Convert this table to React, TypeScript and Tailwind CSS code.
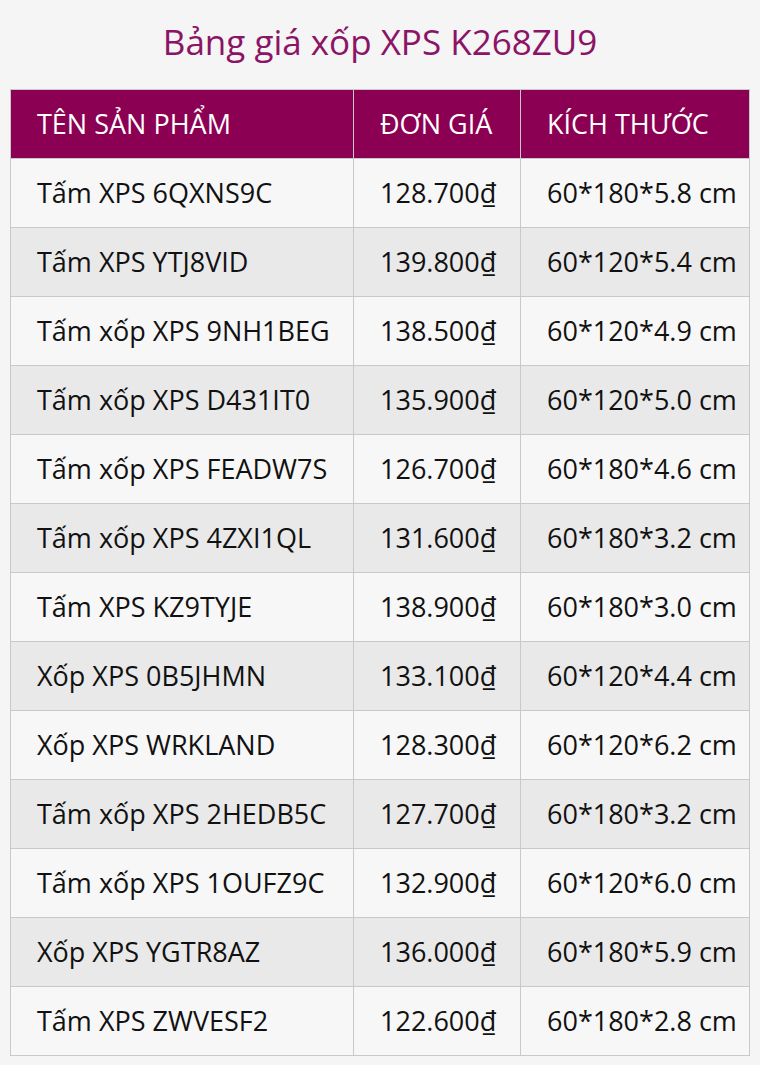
const ROWS: [string, string, string][] = [
  ["Tấm XPS 6QXNS9C", "128.700₫", "60*180*5.8 cm"],
  ["Tấm XPS YTJ8VID", "139.800₫", "60*120*5.4 cm"],
  ["Tấm xốp XPS 9NH1BEG", "138.500₫", "60*120*4.9 cm"],
  ["Tấm xốp XPS D431IT0", "135.900₫", "60*120*5.0 cm"],
  ["Tấm xốp XPS FEADW7S", "126.700₫", "60*180*4.6 cm"],
  ["Tấm xốp XPS 4ZXI1QL", "131.600₫", "60*180*3.2 cm"],
  ["Tấm XPS KZ9TYJE", "138.900₫", "60*180*3.0 cm"],
  ["Xốp XPS 0B5JHMN", "133.100₫", "60*120*4.4 cm"],
  ["Xốp XPS WRKLAND", "128.300₫", "60*120*6.2 cm"],
  ["Tấm xốp XPS 2HEDB5C", "127.700₫", "60*180*3.2 cm"],
  ["Tấm xốp XPS 1OUFZ9C", "132.900₫", "60*120*6.0 cm"],
  ["Xốp XPS YGTR8AZ", "136.000₫", "60*180*5.9 cm"],
  ["Tấm XPS ZWVESF2", "122.600₫", "60*180*2.8 cm"],
];

export default function App() {
  return (
    <div className="min-h-[1065px] w-[760px] bg-[#f5f5f5] font-['Open_Sans',sans-serif] text-[#111]">
      <h1 className="flex h-[89px] items-center justify-center pb-1 text-[35px] font-normal text-[#8b1466]">
        Bảng giá xốp XPS K268ZU9
      </h1>
      <table className="ml-[10px] w-[740px] border-collapse text-[27px]">
        <thead>
          <tr className="h-[69px] bg-[#8b0053] text-left text-white">
            <th className="w-[343px] border border-[#c9c9c9] pl-[26px] font-normal">TÊN SẢN PHẨM</th>
            <th className="w-[167px] border border-[#c9c9c9] pl-[26px] font-normal">ĐƠN GIÁ</th>
            <th className="border border-[#c9c9c9] pl-[26px] font-normal">KÍCH THƯỚC</th>
          </tr>
        </thead>
        <tbody>
          {ROWS.map((r, i) => (
            <tr key={r[0]} className={i % 2 === 0 ? "h-[69px] bg-[#f7f7f7]" : "h-[69px] bg-[#e9e9e9]"}>
              <td className="border border-[#c9c9c9] pl-[26px]">{r[0]}</td>
              <td className="border border-[#c9c9c9] pl-[26px]">{r[1]}</td>
              <td className="border border-[#c9c9c9] pl-[26px]">{r[2]}</td>
            </tr>
          ))}
        </tbody>
      </table>
    </div>
  );
}
